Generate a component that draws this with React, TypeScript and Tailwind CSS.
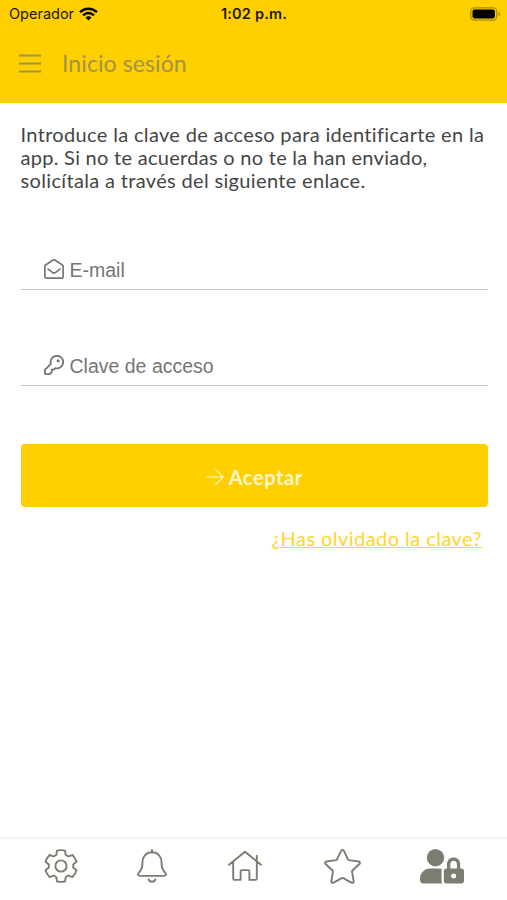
import React from "react";

const intro = [
  { text: "Introduce la clave de acceso para identificarte en la", className: "tracking-[0.34px]" },
  { text: "app. Si no te acuerdas o no te la han enviado,", className: "tracking-[0.28px]" },
  { text: "solicítala a través del siguiente enlace.", className: "tracking-[0.34px]" },
];

export default function App() {
  return (
    <div className="flex h-[900px] w-[507px] flex-col overflow-hidden bg-white font-['Lato',sans-serif]">
      <header className="h-[103px] shrink-0 bg-[#ffcf00]">
        <StatusBar />
        <div className="flex h-[72px] items-center pl-[19px]">
          <button aria-label="Menú">
            <svg className="block h-[19px] w-[22px]" viewBox="0 0 22 19" fill="none" stroke="#a2924a" strokeWidth="1.8">
              <path d="M0 1.5h22M0 9.5h22M0 17.5h22" />
            </svg>
          </button>
          <h1 className="ml-[21px] text-[23px] leading-7 font-normal tracking-[0.1px] whitespace-nowrap text-[#a2924a]">
            Inicio sesión
          </h1>
        </div>
      </header>

      <main className="flex flex-1 flex-col pt-5 pr-[19px] pl-[20.5px]">
        <p className="text-[20px] leading-[23px] text-[#454545]">
          {intro.map((line) => (
            <span key={line.text} className={`block whitespace-nowrap ${line.className}`}>
              {line.text}
            </span>
          ))}
        </p>

        <form className="mt-[57px] flex flex-col">
          <Field icon={<MailIcon />} label="E-mail" />
          <div className="h-[55px]" />
          <Field icon={<KeyIcon />} label="Clave de acceso" />
          <button
            type="button"
            className="mt-[58px] flex h-[63px] items-center justify-center rounded-[4px] bg-[#ffcf00] pt-[2px] text-[20px] font-bold text-[#fff6cd]"
          >
            <svg className="mr-[5px] h-[18px] w-[18px]" viewBox="0 0 18 18" fill="none" stroke="currentColor" strokeWidth="1.2" strokeLinecap="round" strokeLinejoin="round">
              <path d="M.6 9h16.5M9.5 1.2 17.2 9l-7.7 7.8" />
            </svg>
            <span className="tracking-[0.6px]">Aceptar</span>
          </button>
        </form>

        <a className="mt-[19px] mr-[6px] self-end text-[20px] leading-6 tracking-[0.45px] whitespace-nowrap text-[#ffd52e] underline decoration-1 underline-offset-1">
          ¿Has olvidado la clave?
        </a>
      </main>

      <nav className="flex h-[63px] shrink-0 items-start border-t-2 border-[#f5f5f5] pt-[10px] pl-[44px] text-[#7b7d70]">
        <GearIcon />
        <BellIcon />
        <HomeIcon />
        <StarIcon />
        <UserLockIcon />
      </nav>
    </div>
  );
}

function StatusBar() {
  return (
    <div className="grid h-[27px] grid-cols-3 items-center pr-[6px] pl-[9px] font-['Inter',sans-serif] text-[14.5px] text-[#1c1800]">
      <div className="flex items-center gap-[5px]">
        <span>Operador</span>
        <svg className="h-[14px] w-[19px]" viewBox="0 0 19 14" fill="none" stroke="#000" strokeWidth="2.5">
          <path d="M1 5.2c4.9-4.7 12.1-4.7 17 0M4.1 8.3c3.1-3 7.700-3 10.800 0" />
          <path d="M6.5 10.4c1.8-1.5 4.2-1.5 6 0l-3 3z" fill="#000" stroke="none" />
        </svg>
      </div>
      <span className="-ml-[2px] text-center font-semibold tracking-[0.2px] whitespace-nowrap">1:02 p.m.</span>
      <svg className="h-[14px] w-[31px] justify-self-end" viewBox="0 0 31 14">
        <rect x=".8" y=".8" width="26" height="12.4" rx="3.6" fill="none" stroke="#aa8a00" strokeWidth="1.2" />
        <rect x="2.5" y="2.6" width="22.4" height="8.8" rx="1.8" fill="#000" />
        <path d="M28.6 4.8c2 .8 2 3.6 0 4.4z" fill="#aa8a00" />
      </svg>
    </div>
  );
}

function Field({ icon, label }: { icon: React.ReactNode; label: string }) {
  return (
    <div className="flex h-[41px] items-center border-b border-[#c8c8c8] pl-[23.5px] text-[#757575]">
      {icon}
      <input
        aria-label={label}
        placeholder={label}
        className="ml-[5.5px] min-w-0 flex-1 bg-transparent pt-[3px] font-['Liberation_Sans',sans-serif] text-[19.5px] outline-none placeholder:text-[#757575]"
      />
    </div>
  );
}

function MailIcon() {
  return (
    <svg className="h-5 w-5 shrink-0" viewBox="0 0 20 20" fill="none" stroke="currentColor" strokeWidth="1.7" strokeLinecap="round" strokeLinejoin="round">
      <path d="M.9 7.4c0-.6.3-1.1.7-1.4L8.7 1.3c.8-.6 1.8-.6 2.6 0L18.4 6c.4.3.7.8.7 1.4v10c0 1-.7 1.7-1.7 1.7H2.6c-1 0-1.7-.7-1.7-1.7z" />
      <path d="m4.1 10.1 4.2 3.3c1 .8 2.4.8 3.4 0l4.2-3.3" />
    </svg>
  );
}

function KeyIcon() {
  return (
    <svg className="h-5 w-5 shrink-0" viewBox="0 0 20 20" fill="none" stroke="currentColor" strokeWidth="1.8" strokeLinejoin="round">
      <path d="M6.900 8.900A6.300 6.300 0 1 1 11.100 13.100L9.700 14.600H7.800V17L5.700 19.100H1.700a.8.8 0 0 1-.8-.8v-3.400z" />
      <circle cx="14.2" cy="5.8" r="1.6" fill="currentColor" stroke="none" />
    </svg>
  );
}

function GearIcon() {
  return (
    <svg className="h-[34px] w-[34px]" viewBox="-17 -17 34 34" fill="none" stroke="currentColor" strokeWidth="1.9" strokeLinejoin="round">
      <path d="M-4.1-15.4Q0-16.4 4.1-15.400L4.6-11.200 7.400-9.500 11.400-11.200Q14.400-8 15.500-4.200L12.200-1.600V1.600L15.500 4.200Q14.400 8 11.400 11.200L7.400 9.500 4.600 11.200 4.100 15.400Q0 16.400-4.100 15.400L-4.600 11.200-7.400 9.500-11.400 11.200Q-14.400 8-15.500 4.200L-12.200 1.600V-1.600L-15.500-4.200Q-14.400-8-11.400-11.200L-7.400-9.500-4.600-11.200Z" />
      <circle r="5.6" />
    </svg>
  );
}

function BellIcon() {
  return (
    <svg className="ml-[59px] h-[34px] w-[30px]" viewBox="0 0 30 34" fill="none" stroke="currentColor" strokeWidth="1.9" strokeLinecap="round" strokeLinejoin="round">
      <path d="M15 1v2.300M15 3.300C9.200 3.300 5.500 7.500 5.500 13c0 6.200-1.500 8.700-3.800 11.200-1.200 1.300-.5 2.700 1.200 2.700h24.200c1.700 0 2.400-1.400 1.200-2.700-2.300-2.500-3.800-5-3.800-11.200 0-5.500-3.700-9.700-9.500-9.700z" />
      <path d="M11.700 30.500c.6 3 6 3 6.600 0" />
    </svg>
  );
}

function HomeIcon() {
  return (
    <svg className="ml-[61px] h-[34px] w-[34px]" viewBox="0 0 34 34" fill="none" stroke="currentColor" strokeWidth="1.9" strokeLinecap="round" strokeLinejoin="round">
      <path d="M1 15.800 17 2.800l16 13M5.200 13v16.600c0 .9.400 1.300 1.300 1.300h6.100v-8.600c0-.8.400-1.200 1.200-1.200h6.400c.8 0 1.200.4 1.200 1.200v8.600h6.100c.9 0 1.300-.4 1.300-1.300V13M28.800 12V6.700" />
    </svg>
  );
}

function StarIcon() {
  return (
    <svg className="ml-[62px] h-[35px] w-[37px]" viewBox="0 0 37 35" fill="none" stroke="currentColor" strokeWidth="1.9" strokeLinejoin="round">
      <path d="M17.100 1.900 13 10.300c-.2.500-.5.700-1 .8l-9.400 1.400c-1.500.2-2 1.500-1 2.500l6.900 6.500c.4.400.5.800.4 1.300L7.400 32c-.2 1.500.9 2.300 2.200 1.600l8.200-4.400c.5-.2.900-.2 1.400 0l8.200 4.400c1.300.7 2.400-.1 2.200-1.600l-1.500-9.200c-.1-.5 0-.9.400-1.300l6.900-6.500c1-1 .5-2.300-1-2.500L25 11.100c-.5-.1-.8-.3-1-.8l-4.100-8.400c-.7-1.300-2.100-1.300-2.800 0z" />
    </svg>
  );
}

function UserLockIcon() {
  return (
    <svg className="ml-[59px] h-[35px] w-[44px]" viewBox="0 0 44 35" fill="currentColor">
      <circle cx="15.5" cy="8.7" r="8.7" />
      <path d="M10 19.500h8.200c1.300 0 2.600.2 3.700.6-.3.600-.4 1.200-.4 1.900v10c0 1 .3 1.800.8 2.500H3.500C1.200 34.500 0 33.200 0 31v-1.500c0-5.500 4.500-10 10-10z" />
      <path fillRule="evenodd" d="M27 19.500V15c0-4 3-6.600 6.600-6.600s6.600 2.600 6.600 6.600v4.500h1.300c1.400 0 2.500 1.100 2.500 2.500v10c0 1.400-1.100 2.500-2.500 2.500H26.300c-1.400 0-2.500-1.100-2.500-2.500V22c0-1.400 1.100-2.500 2.500-2.500zM30.300 19.500h6.600V15c0-2-1.500-3.300-3.300-3.300s-3.300 1.300-3.300 3.300zM33.600 24.400a2.500 2.500 0 1 0 0 5 2.500 2.500 0 0 0 0-5z" />
    </svg>
  );
}
